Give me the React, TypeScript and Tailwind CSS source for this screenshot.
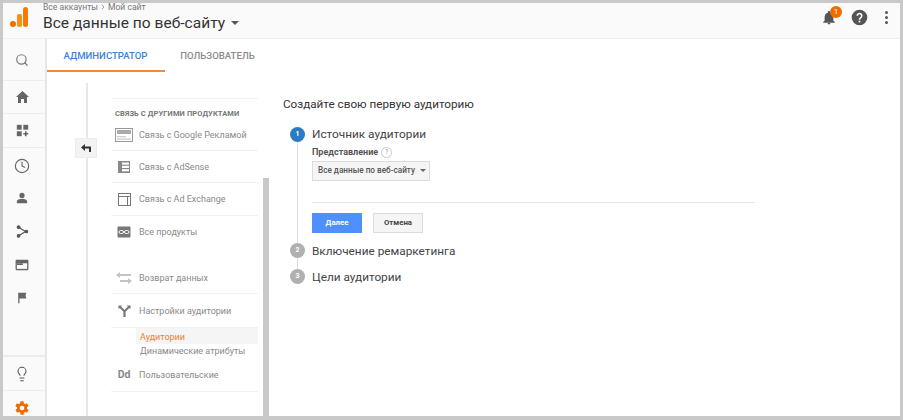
import React from "react";
import { Search, Clock, Lightbulb, ChevronRight } from "lucide-react";

const ff = { fontFamily: "Roboto, 'Liberation Sans', sans-serif" };

function Rail({ children, h, border = true }: { children: React.ReactNode; h: string; border?: boolean }) {
  return <div className={`flex items-center justify-center w-full pr-[4px] text-[#666] ${h} ${border ? "border-b border-[#ececec]" : ""}`}>{children}</div>;
}

function HomeIcon() {
  return <svg width="13" height="12" viewBox="0 0 13 12" fill="#666"><path d="M6.500 0 0 6h2v6h3V8h3v4h3V6h2z"/></svg>;
}
function Grid() {
  return <svg width="13" height="13" viewBox="0 0 16 16" fill="#666"><rect x="1" y="1" width="6" height="6"/><rect x="9" y="1" width="6" height="6"/><rect x="1" y="9" width="6" height="6"/><path d="M11 9h2v2h2v2h-2v2h-2v-2H9v-2h2z"/></svg>;
}
function Person() {
  return <svg width="12" height="12" viewBox="0 0 14 14" fill="#666"><circle cx="7" cy="4" r="3"/><path d="M1 13v-2c0-2 3-3 6-3s6 1 6 3v2z"/></svg>;
}
function Branch() {
  return <svg width="13" height="13" viewBox="0 0 15 15" fill="#555" stroke="#555" strokeWidth="1.3"><path d="M3 2.500 11 7.500 3 12.500" fill="none"/><circle cx="3" cy="2.500" r="1.500"/><circle cx="3" cy="12.500" r="1.500"/><circle cx="12" cy="7.500" r="1.500"/></svg>;
}
function Display() {
  return <svg width="14" height="12" viewBox="0 0 16 14"><rect x="0.500" y="1" width="15" height="12" rx="1.200" fill="#666"/><rect x="2" y="5" width="12" height="6.500" fill="#fff"/><rect x="2" y="5" width="7" height="2" fill="#666"/></svg>;
}
function Flag() {
  return <svg width="11" height="12" viewBox="0 0 12 14" fill="#666"><path d="M1 1h9.500l-1 3 1 3.500H2.500V13H1z"/></svg>;
}
function Gear() {
  return <svg width="16" height="16" viewBox="0 0 24 24" fill="#ef6c00"><path fillRule="evenodd" d="M19.400 13c.1-.3.1-.7.1-1s0-.7-.1-1l2.100-1.600c.2-.2.2-.4.1-.6l-2-3.500c-.1-.2-.4-.3-.6-.2l-2.500 1c-.5-.4-1.100-.7-1.700-1l-.4-2.600c0-.3-.2-.5-.5-.5h-4c-.3 0-.5.2-.5.4l-.4 2.700c-.6.2-1.100.6-1.700 1l-2.500-1c-.2-.1-.5 0-.6.2l-2 3.500c-.1.2-.1.4.1.6L4.600 11c-.1.3-.1.7-.1 1s0 .7.1 1l-2.100 1.600c-.2.2-.2.4-.1.6l2 3.500c.1.2.4.3.6.2l2.500-1c.5.4 1.100.7 1.700 1l.4 2.600c0 .3.2.5.5.5h4c.3 0 .5-.2.5-.4l.4-2.700c.6-.2 1.100-.6 1.700-1l2.500 1c.2.1.5 0 .6-.2l2-3.500c.1-.2.1-.4-.1-.6zM12 15.500a3.500 3.500 0 1 1 0-7 3.500 3.500 0 0 1 0 7z"/></svg>;
}

const navIcons: Record<string, React.ReactNode> = {
  ads: <svg width="18" height="14" viewBox="0 0 18 14"><rect x="0.500" y="0.500" width="17" height="13" fill="#fff" stroke="#999"/><rect x="2" y="2" width="14" height="4" fill="#aaa"/><rect x="2" y="8" width="9" height="1.300" fill="#ccc"/><rect x="2" y="10.500" width="14" height="1.300" fill="#ccc"/></svg>,
  adsense: <svg width="14" height="14" viewBox="0 0 14 14"><rect x="1" y="1" width="12" height="12" fill="#888"/><rect x="5" y="2.500" width="7" height="2.200" fill="#fff"/><rect x="5" y="5.800" width="7" height="2.200" fill="#fff"/><rect x="5" y="9.100" width="7" height="2.200" fill="#fff"/></svg>,
  adx: <svg width="13" height="13" viewBox="0 0 13 13" fill="none" stroke="#777"><rect x="0.500" y="0.500" width="12" height="12"/><path d="M0.500 3.500h12M9.500 3.500v9"/></svg>,
  all: <svg width="14" height="12" viewBox="0 0 14 12"><rect x="0.500" y="0.500" width="13" height="11" rx="1" fill="#777"/><rect x="2" y="4.500" width="4.500" height="3" rx="1.500" fill="none" stroke="#fff"/><rect x="7.500" y="4.500" width="4.500" height="3" rx="1.500" fill="none" stroke="#fff"/></svg>,
  back: <svg width="18" height="16" viewBox="0 0 18 14" fill="none" stroke="#c4c4c4" strokeWidth="2"><path d="M5 4h11M5 10h8"/><path d="M1 4l4-3v6zM17 10l-4-3v6z" fill="#c4c4c4" stroke="none"/></svg>,
  aud: <svg width="13" height="13" viewBox="0 0 14 14" fill="#777"><path d="M0.500 1.500h4l-1.200 1.200L7 6.400l3.600-3.700L9.500 1.500h4v4l-1.300-1.200L8.200 8.300V14H5.800V8.300L1.800 4.300.5 5.500z"/></svg>,
};

function NavRow({ icon, label, h, border = true }: { icon: React.ReactNode; label: string; h: string; border?: boolean }) {
  return (
    <div className={`flex items-center ${h} ${border ? "border-b border-[#f1f1f1]" : ""}`}>
      <div className="w-[26px] mr-[2px] flex justify-center shrink-0">{icon}</div>
      <span className="text-[9px] mt-[2px] whitespace-nowrap text-[#8a8a8a]">{label}</span>
    </div>
  );
}

function Step({ n, active, children }: { n: number; active?: boolean; children: React.ReactNode }) {
  return (
    <div className="flex items-center gap-[7px] h-[18px]">
      <div className={`w-[15px] h-[15px] rounded-full flex items-center justify-center text-[7px] font-bold text-white shrink-0 ${active ? "bg-[#2c7cc4]" : "bg-[#b0b0b0]"}`}>{n}</div>
      <span className="text-[11.8px] leading-[18px] text-[#444]">{children}</span>
    </div>
  );
}

export default function App() {
  return (
    <div style={ff} className="w-[903px] h-[420px] bg-[#c9c9c9] pt-[3px] pb-[4px] pl-[3px] pr-[3px] flex flex-col overflow-hidden">
      <header className="h-[36px] shrink-0 bg-[#fafafa] flex items-center border-b border-[#eeeeee]">
        <div className="w-[40px] pl-[7px] -mt-[8px] flex justify-start">
          <svg width="18" height="20" viewBox="0 0 18 20"><rect x="13" y="0" width="5" height="20" rx="2.500" fill="#f57c00"/><rect x="7" y="7" width="5" height="13" rx="2.200" fill="#f79015"/><circle cx="3" cy="17" r="3" fill="#ef6c00"/></svg>
        </div>
        <div className="flex flex-col -mt-[7px]">
          <div className="flex items-center text-[8.6px] leading-[10px] text-[#777]">Все аккаунты <ChevronRight size={8} className="mx-[1px]" /> Мой сайт</div>
          <div className="flex items-center text-[15.55px] leading-[19px] text-[#333] mt-[2px]">Все данные по веб-сайту<span className="ml-[6px] w-0 h-0 border-x-[4px] border-x-transparent border-t-[4px] border-t-[#555]"></span></div>
        </div>
        <div className="ml-auto flex items-center -mt-[6px] text-[#666]">
          <div className="relative mr-[15px]">
            <svg width="14" height="14" viewBox="0 0 24 24" fill="#555"><path d="M12 23a2.500 2.500 0 0 0 2.500-2.500h-5A2.500 2.500 0 0 0 12 23zm7.500-6.500v-6c0-3.700-2-6.800-5.500-7.600V2a2 2 0 0 0-4 0v.9C6.500 3.700 4.500 6.800 4.500 10.500v6L2 19v1h20v-1z"/></svg>
            <span className="absolute -top-[5px] left-[8px] w-[12px] h-[12px] rounded-full bg-[#ef6c00] text-white text-[8px] leading-[12px] text-center">1</span>
          </div>
          <svg width="17" height="17" viewBox="0 0 24 24" className="mr-[17px]"><circle cx="12" cy="12" r="11" fill="#555"/><path d="M8.800 9.500a3.200 3.200 0 1 1 5 2.700c-1 .7-1.800 1.300-1.800 2.800" fill="none" stroke="#fff" strokeWidth="2.200"/><rect x="10.800" y="16.500" width="2.400" height="2.400" fill="#fff"/></svg>
          <div className="flex flex-col gap-[2px] mr-[12px]">
            <span className="w-[3px] h-[3px] bg-[#555] rounded-full"></span>
            <span className="w-[3px] h-[3px] bg-[#555] rounded-full"></span>
            <span className="w-[3px] h-[3px] bg-[#555] rounded-full"></span>
          </div>
        </div>
      </header>

      <div className="flex-1 flex min-h-0">
        <aside className="w-[44px] shrink-0 bg-[#fafafa] border-r-2 border-[#e6e6e6] flex flex-col">
          <Rail h="h-[42px]"><Search size={14} strokeWidth={2} color="#777" /></Rail>
          <Rail h="h-[33px]"><HomeIcon /></Rail>
          <Rail h="h-[34px]"><Grid /></Rail>
          <Rail h="h-[36px]" border={false}><Clock size={16} strokeWidth={1.7} /></Rail>
          <Rail h="h-[28px]" border={false}><Person /></Rail>
          <Rail h="h-[38px]" border={false}><Branch /></Rail>
          <Rail h="h-[30px]" border={false}><Display /></Rail>
          <Rail h="h-[36px]" border={false}><Flag /></Rail>
          <div className="flex-1 border-b-2 border-[#ececec]"></div>
          <Rail h="h-[34px]"><Lightbulb size={16} strokeWidth={1.6} color="#555" /></Rail>
          <div className="h-[25px] flex justify-center pt-[9px] pr-[4px]"><Gear /></div>
        </aside>

        <main className="flex-1 bg-white flex flex-col min-w-0">
          <div className="h-[33px] shrink-0 flex">
            <div className="w-[118px] h-[33px] border-b-[2px] border-[#f08a3c] flex items-center justify-center pt-[3px] pr-[1px] text-[9.6px] font-medium text-[#3f7fe0]">АДМИНИСТРАТОР</div>
            <div className="w-[105px] flex items-center justify-center pt-[1px] text-[9.6px] font-medium text-[#8c8c8c]">ПОЛЬЗОВАТЕЛЬ</div>
          </div>

          <div className="flex-1 flex min-h-0">
            <div className="w-[39px] shrink-0"></div>
            <div className="relative w-[25px] shrink-0 border-l-2 border-[#e8e8e8] mt-[11px]">
              <div className="absolute left-[-13px] top-[55px] w-[22px] h-[20px] bg-[#f3f3f3] border border-[#ececec] flex items-center justify-center">
                <svg width="11" height="8" viewBox="0 0 11 8" fill="#333"><path d="M0 3.500 4 0v2.500h6V8H8V4.500H4V7z"/></svg>
              </div>
            </div>
            <div className="w-[147px] shrink-0 overflow-hidden pt-[26px]">
              <div className="h-[22px] flex items-center pt-[8px] text-[7.5px] font-bold text-[#777] pl-[4px] tracking-[0.1px] border-t border-[#f1f1f1]">СВЯЗЬ С ДРУГИМИ ПРОДУКТАМИ</div>
              <NavRow h="h-[31px]" icon={navIcons.ads} label="Связь с Google Рекламой" />
              <NavRow h="h-[32px]" icon={navIcons.adsense} label="Связь с AdSense" />
              <NavRow h="h-[33px]" icon={navIcons.adx} label="Связь с Ad Exchange" />
              <NavRow h="h-[32px]" icon={navIcons.all} label="Все продукты" border={false} />
              <div className="h-[14px]"></div>
              <NavRow h="h-[32px]" icon={navIcons.back} label="Возврат данных" />
              <NavRow h="h-[33px]" icon={navIcons.aud} label="Настройки аудитории" border={false} />
              <div className="pl-[25px] border-t border-[#f1f1f1]">
                <div className="h-[16px] pl-[4px] pt-[4px] bg-[#f5f5f5] flex items-center text-[9px] text-[#e8822e]">Аудитории</div>
                <div className="h-[14px] pl-[4px] pt-[2px] flex items-center text-[9px] whitespace-nowrap text-[#8a8a8a]">Динамические атрибуты</div>
              </div>
              <div className="h-[34px] flex items-center border-b border-[#f1f1f1]">
                <div className="w-[26px] mr-[2px] flex justify-center shrink-0 text-[10.5px] font-bold text-[#888]">Dd</div>
                <span className="text-[9px] mt-[3px] text-[#8a8a8a]">Пользовательские</span>
              </div>
            </div>
            <div className="w-[11px] shrink-0 flex justify-end pt-[106px]">
              <div className="w-[6px] bg-[#c8c8c8]"></div>
            </div>
            <section className="flex-1 min-w-0 pl-[14px] pt-[25px]">
              <h1 className="text-[11.7px] leading-[15px] text-[#333]">Создайте свою первую аудиторию</h1>
              <div className="mt-[13px] ml-[7px] relative">
                <div className="absolute left-[6.500px] top-[10px] w-px h-[136px] bg-[#dddddd]"></div>
                <div className="relative">
                  <Step n={1} active>Источник аудитории</Step>
                  <div className="ml-[22px] w-[443px]">
                    <div className="flex items-center gap-[3px] mt-[3px]">
                      <span className="text-[9px] font-bold text-[#555]">Представление</span>
                      <span className="w-[11px] h-[11px] rounded-full border border-[#ccc] text-[7px] leading-[9px] text-center text-[#999]">?</span>
                    </div>
                    <div className="mt-[1px] w-[118px] h-[20px] bg-[#f5f5f5] border border-[#dcdcdc] flex items-center justify-between pl-[5px] pr-[3px] text-[8.2px] font-medium text-[#555]">
                      <span>Все данные по веб-сайту</span>
                      <span className="w-0 h-0 border-x-[3px] border-x-transparent border-t-[3px] border-t-[#666]"></span>
                    </div>
                    <div className="mt-[21px] border-t border-[#e6e6e6]"></div>
                    <div className="mt-[10px] flex gap-[11px]">
                      <button className="w-[50px] h-[20px] bg-[#4d90fe] text-white text-[7.8px] font-bold">Далее</button>
                      <button className="w-[50px] h-[20px] bg-[#f5f5f5] border border-[#dcdcdc] text-[#444] text-[7.8px] font-bold">Отмена</button>
                    </div>
                  </div>
                  <div className="mt-[9px]"><Step n={2}>Включение ремаркетинга</Step></div>
                  <div className="mt-[8px]"><Step n={3}>Цели аудитории</Step></div>
                </div>
              </div>
            </section>
          </div>
        </main>
      </div>
    </div>
  );
}
